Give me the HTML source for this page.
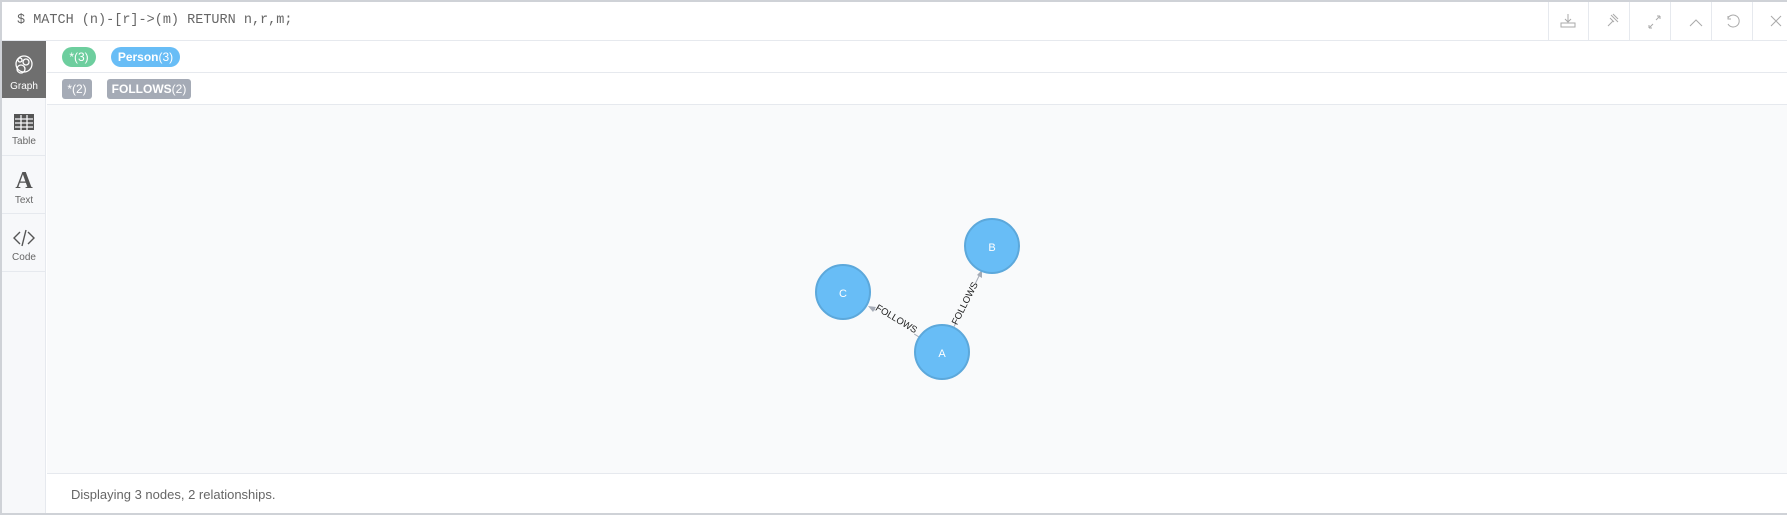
<!DOCTYPE html>
<html><head><meta charset="utf-8"><style>
*{margin:0;padding:0;box-sizing:border-box}
body{width:1787px;height:515px;background:#fff;font-family:"Liberation Sans",sans-serif;position:relative;overflow:hidden}
.a{position:absolute}
.ib{position:absolute;top:2px;width:41px;height:38px;border-left:1px solid #e6e9ee}
.side{position:absolute;left:2px;width:44px;text-align:center;font-size:10px;color:#666;border-bottom:1px solid #e6e9ee}
.chip{position:absolute;height:20px;line-height:20px;font-size:12px;color:#fff;text-align:center}
</style></head><body>
<div class="a" style="left:0;top:0;width:1787px;height:2px;background:#cfd2d7"></div>
<div class="a" style="left:0;top:0;width:2px;height:515px;background:#cfd2d7"></div>
<div class="a" style="left:0;top:513px;width:1787px;height:2px;background:#cfd2d7"></div>
<div class="a" style="left:17px;top:13px;font-family:'Liberation Mono',monospace;font-size:13.5px;color:#666">$ MATCH (n)-[r]-&gt;(m) RETURN n,r,m;</div>
<div class="a" style="left:2px;top:40px;width:1785px;height:1px;background:#e6e9ee"></div>
<div class="ib" style="left:1548px"></div><div class="ib" style="left:1588px"></div><div class="ib" style="left:1629px"></div><div class="ib" style="left:1670px"></div><div class="ib" style="left:1711px"></div><div class="ib" style="left:1752px"></div>
<svg class="a" style="left:1548px;top:2px" width="239" height="38" fill="none" stroke="#aaa" stroke-width="1">
<path d="M20 12v8M17 17l3 3 3-3M13 21h14v4H13z"/>
<path d="M60 24l5-5M63 13l7 7M65 12l5 5M62 16l4 4"/>
<path d="M101 26l4-4M101 26h3M101 26v-3M112 14l-4 4M112 14h-3M112 14v3"/>
<path d="M142 24l6-6 6 6"/>
<path d="M180 16a6 6 0 1 1 0 6M180 14v3h3"/>
<path d="M223 14l10 10M233 14l-10 10"/>
</svg>
<div class="a" style="left:2px;top:41px;width:44px;height:472px;background:#f7f8fa;border-right:1px solid #e6e9ee"></div>
<div class="side" style="top:41px;height:57px;background:#6f6f6f;color:#fff;border:none">
<svg width="24" height="26" style="margin-top:11px" fill="none" stroke="#fff" stroke-width="1.3"><circle cx="12" cy="12" r="8"/><circle cx="9" cy="17" r="4"/><circle cx="14" cy="10" r="3"/><circle cx="8" cy="8" r="2"/></svg><div style="margin-top:0px">Graph</div></div>
<div class="side" style="top:98px;height:58px"><svg width="22" height="20" style="margin-top:14px"><rect x="1" y="2" width="20" height="16" fill="#555"/><path d="M2 7h18M2 11h18M2 15h18M8 3v15M14 3v15" stroke="#f7f8fa" stroke-width="1.3"/></svg><div style="margin-top:1px">Table</div></div>
<div class="side" style="top:156px;height:58px"><div style="font-family:'Liberation Serif',serif;font-size:24px;font-weight:bold;color:#555;margin-top:13px;line-height:24px">A</div><div style="margin-top:2px">Text</div></div>
<div class="side" style="top:214px;height:58px"><svg width="24" height="20" style="margin-top:14px" fill="none" stroke="#555" stroke-width="1.4"><path d="M8 4l-6 6 6 6M16 4l6 6-6 6M14 2l-4 16"/></svg><div style="margin-top:1px">Code</div></div>
<div class="a" style="left:47px;top:72px;width:1740px;height:1px;background:#e6e9ee"></div>
<div class="a" style="left:47px;top:104px;width:1740px;height:370px;background:#f9fafb;border-top:1px solid #e6e9ee;border-bottom:1px solid #e6e9ee"></div>
<div class="chip" style="left:62px;top:47px;width:34px;border-radius:10px;background:#6dce9e">*(3)</div>
<div class="chip" style="left:111px;top:47px;width:69px;border-radius:10px;background:#68bdf6"><b>Person</b>(3)</div>
<div class="chip" style="left:62px;top:79px;width:30px;border-radius:3px;background:#a5abb6">*(2)</div>
<div class="chip" style="left:107px;top:79px;width:84px;border-radius:3px;background:#a5abb6"><b>FOLLOWS</b>(2)</div>
<svg class="a" style="left:0;top:0" width="1787" height="515" font-family="Liberation Sans,sans-serif">
<line x1="942" y1="351" x2="870" y2="307" stroke="#a5abb6" stroke-width="1"/>
<line x1="942" y1="351" x2="981" y2="272" stroke="#a5abb6" stroke-width="1"/>
<path d="M868 306l8 1-3 5z" fill="#a5abb6"/>
<path d="M982 270l0 8-5-3z" fill="#a5abb6"/>
<rect x="875" y="312" width="45" height="12" fill="#f9fafb" transform="rotate(31 897 318)"/>
<text x="897" y="322" font-size="9.5" text-anchor="middle" transform="rotate(31 897 318)" fill="#222">FOLLOWS</text>
<rect x="942" y="297" width="45" height="12" fill="#f9fafb" transform="rotate(-63 964 303)"/>
<text x="964" y="307" font-size="9.5" text-anchor="middle" transform="rotate(-63 964 303)" fill="#222">FOLLOWS</text>
<g fill="#68bdf6" stroke="#5ca8db" stroke-width="2">
<circle cx="843" cy="292" r="27"/><circle cx="992" cy="246" r="27"/><circle cx="942" cy="352" r="27"/></g>
<g fill="#fff" font-size="11" text-anchor="middle"><text x="843" y="297">C</text><text x="992" y="251">B</text><text x="942" y="357">A</text></g>
</svg>
<div class="a" style="left:71px;top:487px;font-size:13px;color:#666">Displaying 3 nodes, 2 relationships.</div>
</body></html>
